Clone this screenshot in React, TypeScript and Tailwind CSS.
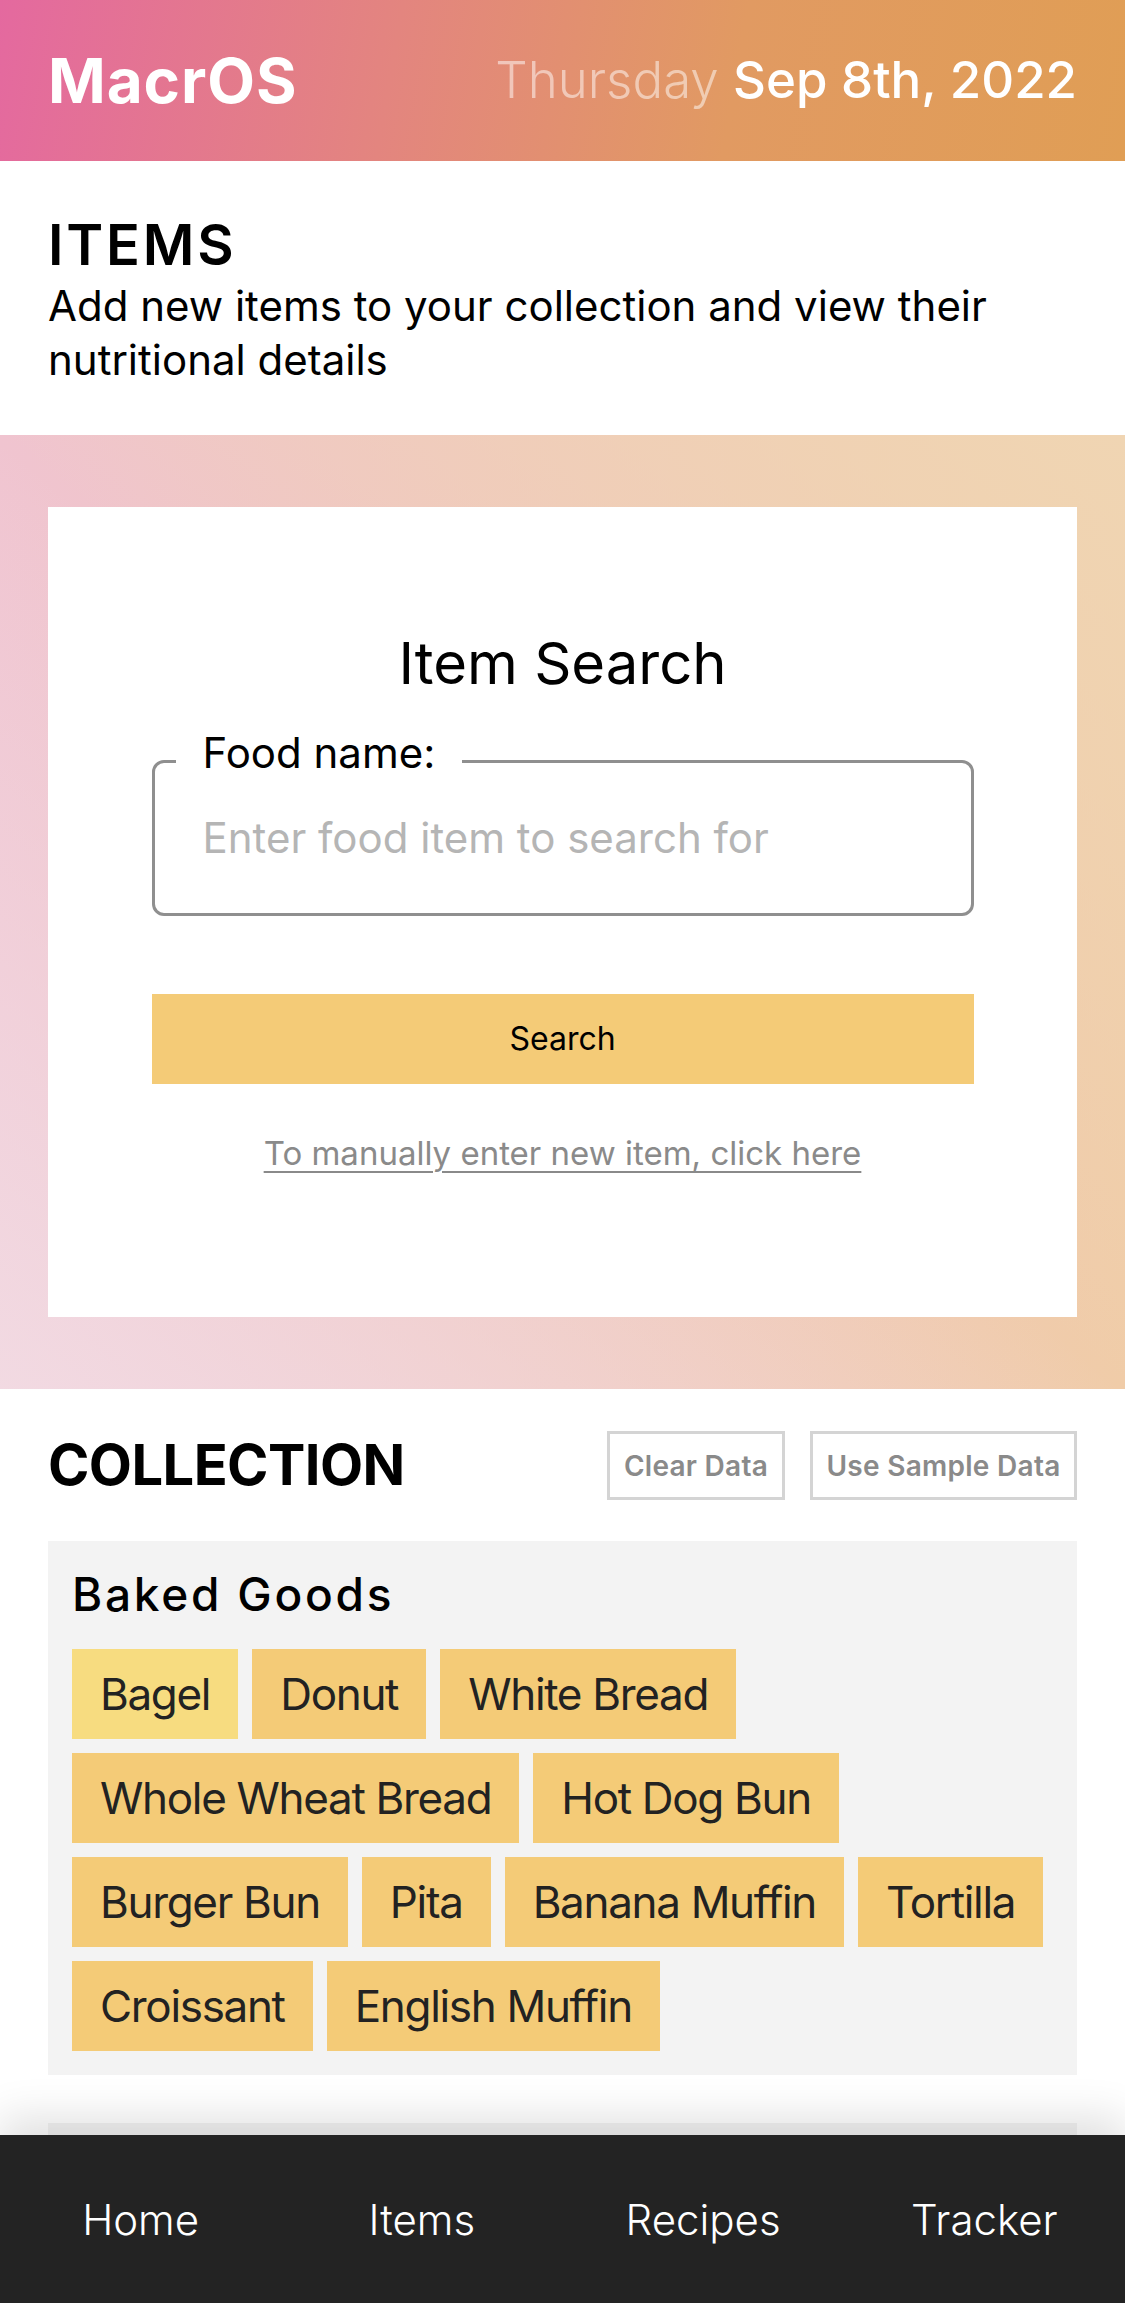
import React from "react";

const baked = [
  "Bagel",
  "Donut",
  "White Bread",
  "Whole Wheat Bread",
  "Hot Dog Bun",
  "Burger Bun",
  "Pita",
  "Banana Muffin",
  "Tortilla",
  "Croissant",
  "English Muffin",
];

function Chip({ label, active }: { label: string; active?: boolean }) {
  return (
    <div
      className={
        "h-[90px] px-[28px] flex items-center text-[44px] tracking-[-0.03em] text-[#222222] " +
        (active ? "bg-[#f7dc80]" : "bg-[#f4cb77]")
      }
    >
      {label}
    </div>
  );
}

function Group({ title, items }: { title: string; items: string[] }) {
  return (
    <div className="bg-[#f3f3f3] px-[24px] pt-[26px] pb-[24px]">
      <div className="text-[46px] leading-[55px] font-medium tracking-[0.06em] text-black">{title}</div>
      <div className="mt-[27px] flex flex-wrap gap-[14px]">
        {items.map((it, i) => (
          <Chip key={it} label={it} active={i === 0} />
        ))}
      </div>
    </div>
  );
}

export default function App() {
  return (
    <div
      className="h-[2303px] w-[1125px] overflow-hidden flex flex-col bg-white"
      style={{ fontFamily: "Inter, 'Noto Sans', sans-serif" }}
    >
      <div className="flex-1 overflow-hidden">
        {/* Header */}
        <header className="h-[161px] px-[48px] flex items-center justify-between bg-[linear-gradient(100deg,#e4699f_0%,#e3857f_35%,#e19a62_65%,#e09e55_100%)]">
          <div className="text-[62px] font-bold tracking-[0.015em] text-white">MacrOS</div>
          <div className="text-[51px] text-white">
            <span className="font-light text-white/50">Thursday</span>{" "}
            <span className="font-medium">Sep 8th, 2022</span>
          </div>
        </header>

        {/* Intro */}
        <section className="px-[48px] pt-[50px] pb-[48px]">
          <h1 className="text-[56px] leading-[68px] font-semibold tracking-[0.05em] text-black">ITEMS</h1>
          <p className="text-[42px] leading-[54px] text-black">
            Add new items to your collection and view their nutritional details
          </p>
        </section>

        {/* Search area */}
        <section className="px-[48px] py-[72px] bg-[linear-gradient(to_top_right,rgba(242,220,228,0.9)_0%,rgba(242,220,228,0)_50%),linear-gradient(to_bottom_left,rgba(240,214,180,0.9)_0%,rgba(240,214,180,0)_50%),linear-gradient(to_right,#f0c4d0,#f0cca8)]">
          <div className="h-[810px] bg-white pt-[121px] flex flex-col items-center">
            <h2 className="text-[58px] leading-[70px] text-black">Item Search</h2>
            <fieldset className="mt-[31px] w-[822px] border-[3px] border-[#8f8f8f] rounded-[12px] pb-[32px]">
              <legend className="ml-[21px] px-[27px] pb-[16px] text-[42px] leading-[48px] text-black">Food name:</legend>
              <input
                className="block w-full h-[88px] pl-[48px] pr-[20px] text-[42px] text-black placeholder:text-[#b5b5b5] outline-none bg-transparent"
                placeholder="Enter food item to search for"
              />
            </fieldset>
            <button className="mt-[78px] w-[822px] h-[90px] bg-[#f4cb77] text-[32px] text-black">Search</button>
            <a className="mt-[50px] text-[33px] leading-[38px] text-[#8a8a8a] underline underline-offset-[6px] decoration-[2px]">
              To manually enter new item, click here
            </a>
          </div>
        </section>

        {/* Collection */}
        <section className="px-[48px] pt-[42px]">
          <div className="flex items-center justify-between h-[69px]">
            <h2 className="text-[56px] leading-[69px] font-bold text-black tracking-[-0.01em]">COLLECTION</h2>
            <div className="flex gap-[25px]">
              <button className="w-[178px] h-[69px] border-[3px] border-[#d4d4d4] text-[28px] font-semibold tracking-[0.01em] text-[#8a8a8a]">
                Clear Data
              </button>
              <button className="w-[267px] h-[69px] border-[3px] border-[#d4d4d4] text-[28px] font-semibold tracking-[0.01em] text-[#8a8a8a]">
                Use Sample Data
              </button>
            </div>
          </div>
          <div className="mt-[41px] flex flex-col gap-[48px]">
            <Group title="Baked Goods" items={baked} />
            <div className="h-[300px] bg-[#f3f3f3]" />
          </div>
        </section>
      </div>

      {/* Bottom nav */}
      <nav className="relative z-10 h-[168px] shrink-0 bg-[#232323] grid grid-cols-4 items-center shadow-[0_-18px_40px_rgba(0,0,0,0.12)]">
        {["Home", "Items", "Recipes", "Tracker"].map((n) => (
          <div key={n} className="text-center text-[42px] font-light text-white">
            {n}
          </div>
        ))}
      </nav>
    </div>
  );
}
